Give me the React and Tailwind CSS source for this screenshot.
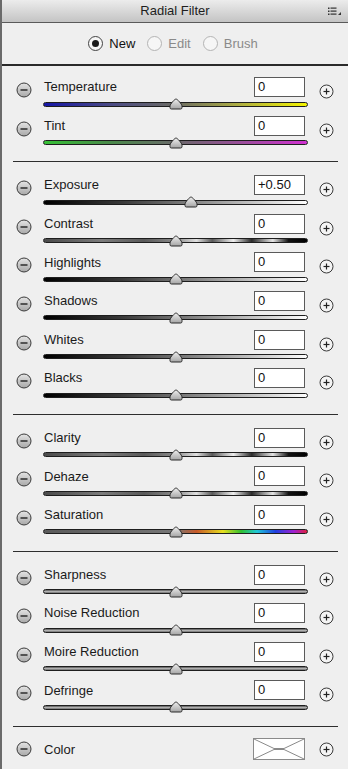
import React from 'react';

const font = "font-['Liberation_Sans',Arial,sans-serif]";

const sections = [
    [
        { label: 'Temperature', value: '0', pos: 0.5, track: 'bg-[linear-gradient(to_right,#1616a6,#4a4a86_25%,#6c6c64_50%,#b0b040_75%,#f4f400)]' },
        { label: 'Tint', value: '0', pos: 0.5, track: 'bg-[linear-gradient(to_right,#36c036,#4a8a4a_25%,#6a6a6a_50%,#9a4e9a_75%,#d030d0)]' },
    ],
    [
        { label: 'Exposure', value: '+0.50', pos: 0.56, track: 'bg-[linear-gradient(to_right,#000,#3a3a3a_30%,#8c8c8c_60%,#fff)]' },
        { label: 'Contrast', value: '0', pos: 0.5, track: 'bg-[linear-gradient(to_right,#4a4a4a,#7c7c7c_22%,#5a5a5a_38%,#8a8a8a_50%,#e0e0e0_58%,#5a5a5a_64%,#eee_72%,#2a2a2a_79%,#e4e4e4_87%,#111_93%,#000)]' },
        { label: 'Highlights', value: '0', pos: 0.5, track: 'bg-[linear-gradient(to_right,#000,#3a3a3a_30%,#8c8c8c_60%,#fff)]' },
        { label: 'Shadows', value: '0', pos: 0.5, track: 'bg-[linear-gradient(to_right,#000,#3a3a3a_30%,#8c8c8c_60%,#fff)]' },
        { label: 'Whites', value: '0', pos: 0.5, track: 'bg-[linear-gradient(to_right,#000,#3a3a3a_30%,#8c8c8c_60%,#fff)]' },
        { label: 'Blacks', value: '0', pos: 0.5, track: 'bg-[linear-gradient(to_right,#000,#3a3a3a_30%,#8c8c8c_60%,#fff)]' },
    ],
    [
        { label: 'Clarity', value: '0', pos: 0.5, track: 'bg-[linear-gradient(to_right,#4a4a4a,#7c7c7c_22%,#5a5a5a_38%,#8a8a8a_50%,#e0e0e0_58%,#5a5a5a_64%,#eee_72%,#2a2a2a_79%,#e4e4e4_87%,#111_93%,#000)]' },
        { label: 'Dehaze', value: '0', pos: 0.5, track: 'bg-[linear-gradient(to_right,#4a4a4a,#7c7c7c_22%,#5a5a5a_38%,#8a8a8a_50%,#e0e0e0_58%,#5a5a5a_64%,#eee_72%,#2a2a2a_79%,#e4e4e4_87%,#111_93%,#000)]' },
        { label: 'Saturation', value: '0', pos: 0.5, track: 'bg-[linear-gradient(to_right,#5a5a5a,#777_50%,#c85a2a_58%,#e8e020_68%,#30c030_75%,#20c8d8_81%,#2040e0_88%,#a020d0_95%,#e02040)]' },
    ],
    [
        { label: 'Sharpness', value: '0', pos: 0.5, track: 'bg-[linear-gradient(to_bottom,#555,#b8b8b8_55%,#666)]' },
        { label: 'Noise Reduction', value: '0', pos: 0.5, track: 'bg-[linear-gradient(to_bottom,#555,#b8b8b8_55%,#666)]' },
        { label: 'Moire Reduction', value: '0', pos: 0.5, track: 'bg-[linear-gradient(to_bottom,#555,#b8b8b8_55%,#666)]' },
        { label: 'Defringe', value: '0', pos: 0.5, track: 'bg-[linear-gradient(to_bottom,#555,#b8b8b8_55%,#666)]' },
    ],
];

const MinusIcon = () => (
    <svg width="16" height="16" viewBox="0 0 16 16">
        <defs>
            <linearGradient id="mg" x1="0" y1="0" x2="0" y2="1">
                <stop offset="0" stopColor="#e4e4e4" />
                <stop offset="1" stopColor="#a8a8a8" />
            </linearGradient>
        </defs>
        <circle cx="8" cy="8" r="7" fill="url(#mg)" stroke="#3a3a3a" strokeWidth="1" />
        <line x1="4.5" y1="8" x2="11.5" y2="8" stroke="#222" strokeWidth="1.4" />
    </svg>
);

const PlusIcon = () => (
    <svg width="15" height="15" viewBox="0 0 15 15">
        <circle cx="7.5" cy="7.5" r="6.5" fill="#f4f4f4" stroke="#3a3a3a" strokeWidth="1" />
        <line x1="4.5" y1="7.5" x2="10.5" y2="7.5" stroke="#222" strokeWidth="1.2" />
        <line x1="7.5" y1="4.5" x2="7.5" y2="10.5" stroke="#222" strokeWidth="1.2" />
    </svg>
);

const Thumb = () => (
    <svg width="14" height="12" viewBox="0 0 14 12">
        <defs>
            <linearGradient id="tg" x1="0" y1="0" x2="0" y2="1">
                <stop offset="0" stopColor="#efefef" />
                <stop offset="1" stopColor="#a4a4a4" />
            </linearGradient>
        </defs>
        <path d="M7 1 C8.2 1 13 6 13 8.2 L13 9.6 Q13 11 11.6 11 L2.4 11 Q1 11 1 9.6 L1 8.2 C1 6 5.8 1 7 1 Z" fill="url(#tg)" stroke="#2a2a2a" strokeWidth="1" />
    </svg>
);

const Radio = ({ checked, label }) => (
    <div className="flex items-center gap-[6px]">
        <span className={`w-[15px] h-[15px] rounded-full border flex items-center justify-center bg-[#f6f6f6] ${checked ? 'border-[#444]' : 'border-[#b4b4b4]'}`}>
            {checked && <span className="w-[7px] h-[7px] rounded-full bg-[#1a1a1a]" />}
        </span>
        <span className={checked ? 'text-[#111]' : 'text-[#8a8a8a]'}>{label}</span>
    </div>
);

const SliderRow = ({ label, value, pos, track }) => (
    <div className="flex items-start h-[38.6px]">
        <div className="w-[41px] pl-[14px] pt-[7px]">
            <MinusIcon />
        </div>
        <div className="w-[265px] flex flex-col">
            <div className="h-[24px] flex items-center justify-between">
                <span className="pl-[1px] text-[13px] text-[#1a1a1a]">{label}</span>
                <div className="w-[51px] h-[20px] mr-[3px] border border-[#5a5a5a] bg-white text-[13px] leading-[18px] pl-[3px] text-[#111]">{value}</div>
            </div>
            <div className="relative h-[10px] flex items-center">
                <div className={`w-full h-[5px] rounded-full border border-[#1e1e1e] ${track}`} />
                <div className="absolute top-[-1px] -ml-[7px] flex" style={{ left: `${pos * 100}%` }}>
                    <Thumb />
                </div>
            </div>
        </div>
        <div className="pl-[11px] pt-[9px]">
            <PlusIcon />
        </div>
    </div>
);

const Divider = () => <div className="ml-[11px] mr-[10px] h-px bg-[#2e2e2e]" />;

const App = () => {
    return (
        <div className={`w-[348px] h-[769px] overflow-hidden bg-[#efefef] border-l-2 border-[#6a6a6a] ${font}`}>
            {/* Header */}
            <header className="relative h-[23px] flex items-center justify-center bg-[linear-gradient(to_bottom,#ececec,#c4c4c4)] border-b border-[#5a5a5a]">
                <span className="text-[13px] text-[#1e1e1e]">Radial Filter</span>
                <svg className="absolute right-[6px] top-[7px]" width="14" height="9" viewBox="0 0 14 9">
                    <rect x="0" y="0.5" width="1.5" height="1.5" fill="#333" />
                    <rect x="0" y="3.5" width="1.5" height="1.5" fill="#333" />
                    <rect x="0" y="6.5" width="1.5" height="1.5" fill="#333" />
                    <rect x="2.5" y="0.5" width="6" height="1.2" fill="#333" />
                    <rect x="2.5" y="3.5" width="6" height="1.2" fill="#333" />
                    <rect x="2.5" y="6.5" width="6" height="1.2" fill="#333" />
                    <path d="M10 8 L13 8 L13 5 Z" fill="#333" />
                </svg>
            </header>

            {/* Mode radios */}
            <div className="h-[43px] flex items-center justify-center gap-[12px] text-[13px] border-b-2 border-[#2a2a2a] pr-[4px]">
                <Radio checked label="New" />
                <Radio label="Edit" />
                <Radio label="Brush" />
            </div>

            {sections.map((rows, i) => (
                <div key={i}>
                    {i > 0 && <Divider />}
                    <div className={`${i === 0 ? 'pt-[9px]' : 'pt-[11px]'} pb-[9px]`}>
                        {rows.map((r) => (
                            <SliderRow key={r.label} {...r} />
                        ))}
                    </div>
                </div>
            ))}

            {/* Color */}
            <Divider />
            <div className="pt-[11px] flex items-center h-[34px]">
                <div className="w-[41px] pl-[14px] flex">
                    <MinusIcon />
                </div>
                <div className="w-[265px] flex items-center justify-between">
                    <span className="pl-[1px] text-[13px] text-[#1a1a1a]">Color</span>
                    <svg className="mr-[3px]" width="52" height="22" viewBox="0 0 52 22">
                        <rect x="0.5" y="0.5" width="51" height="21" fill="#fff" stroke="#8a8a8a" />
                        <path d="M1 1 L21 10.5 L31 10.5 L51 1 M1 21 L21 11.5 L31 11.5 L51 21" fill="none" stroke="#8a8a8a" strokeWidth="1" />
                    </svg>
                </div>
                <div className="pl-[11px] flex">
                    <PlusIcon />
                </div>
            </div>
        </div>
    );
};

export default App;
